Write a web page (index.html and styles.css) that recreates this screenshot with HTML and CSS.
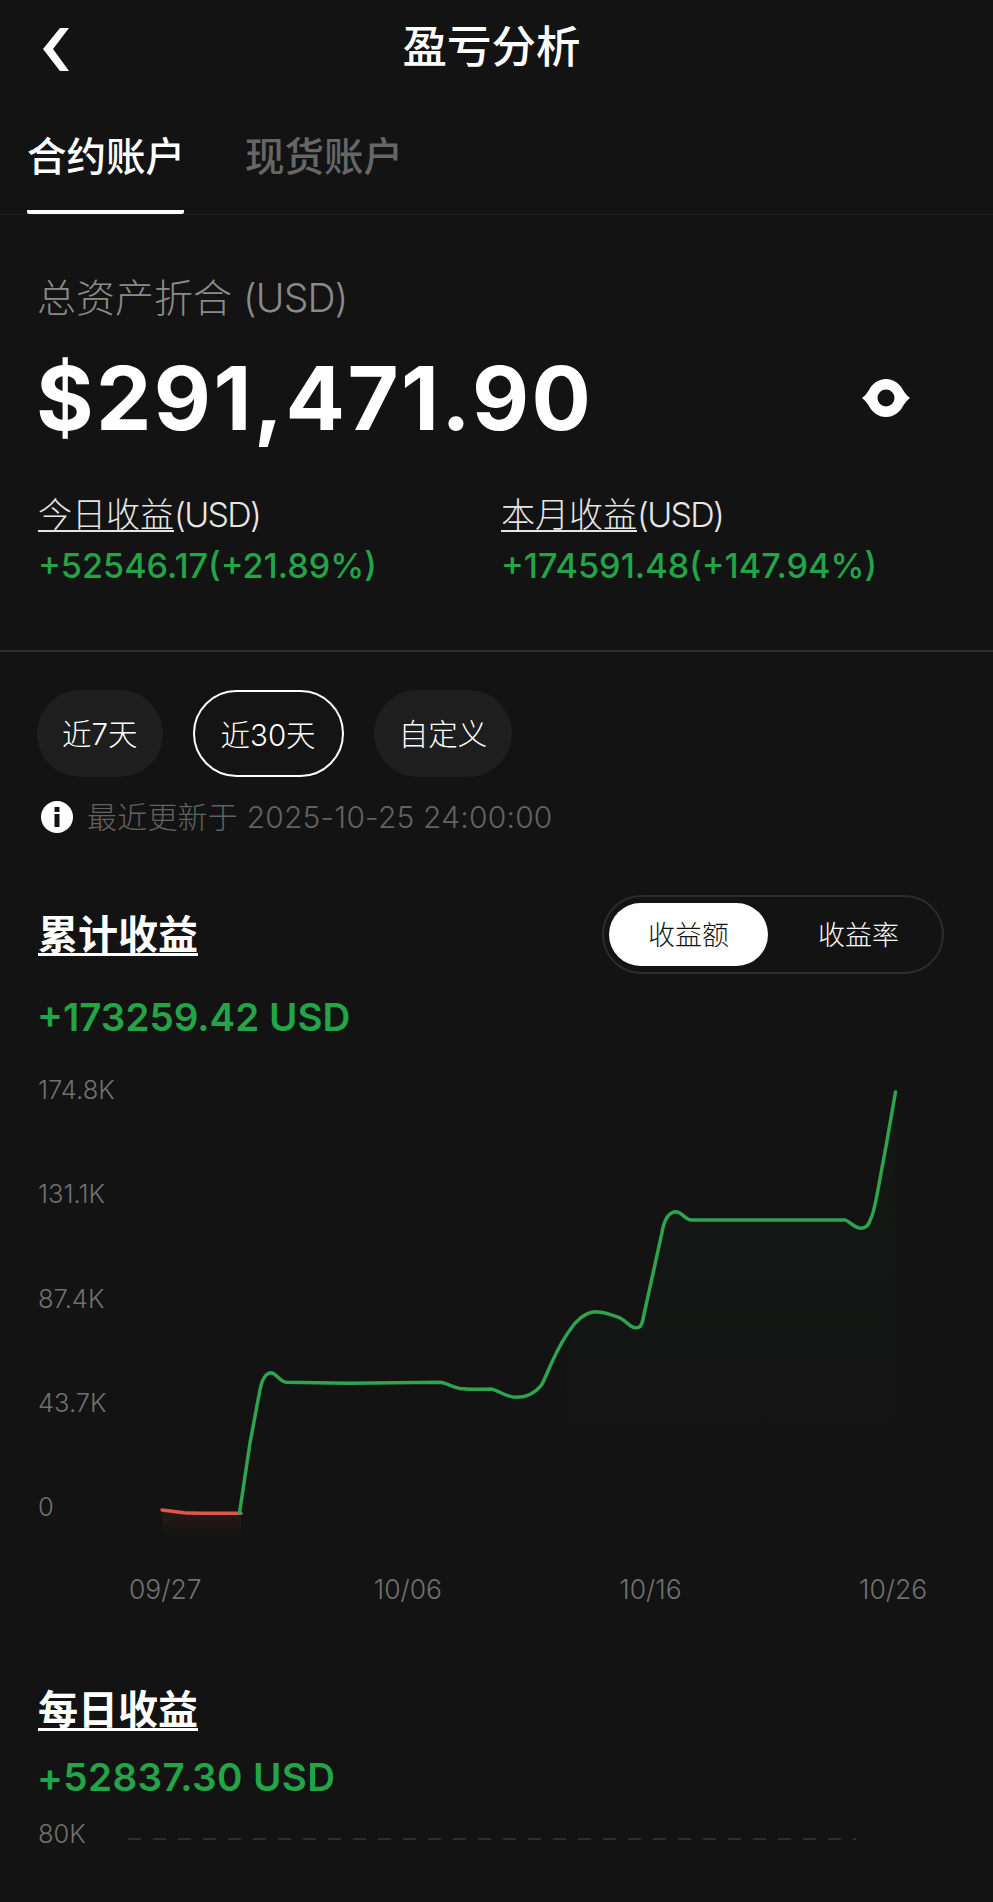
FILE: index.html
```html
<!DOCTYPE html>
<html lang="zh-CN">
<head>
  <meta charset="UTF-8">
  <meta name="viewport" content="width=device-width, initial-scale=1.0">
  <title>盈亏分析</title>
  <link rel="stylesheet" href="styles.css">
</head>
<body>
  <header class="topbar">
    <svg class="back-icon" width="26" height="43" viewBox="0 0 26 43"><path d="M17 0H26L10 21 26 43H17L0 21Z" fill="#fff"/></svg>
    <h1 class="page-title">盈亏分析</h1>
  </header>

  <nav class="tabs">
    <div class="tab tab-active">合约账户</div>
    <div class="tab">现货账户</div>
  </nav>

  <!-- 总资产 -->
  <section class="summary">
    <div class="summary-label">总资产折合 <span class="unit">(USD)</span></div>
    <div class="balance">
      <div class="balance-value">$291,471.90</div>
      <svg class="eye-icon" width="48" height="38" viewBox="0 0 48 38"><path fill-rule="evenodd" fill="#fff" d="M0 19C3 17 5 14 7 11 10 5 16 0 24 0 32 0 38 5 41 11 43 14 45 17 48 19 45 21 43 24 41 27 38 33 32 38 24 38 16 38 10 33 7 27 5 24 3 21 0 19ZM24 10.500A8.500 8.500 0 1 0 24 27.500 8.500 8.500 0 1 0 24 10.500Z"/></svg>
    </div>
    <div class="stats">
      <div>
        <div class="stat-label"><span class="stat-name">今日收益</span><span class="unit">(USD)</span></div>
        <div class="stat-value">+52546.17(+21.89%)</div>
      </div>
      <div>
        <div class="stat-label"><span class="stat-name">本月收益</span><span class="unit">(USD)</span></div>
        <div class="stat-value">+174591.48(+147.94%)</div>
      </div>
    </div>
  </section>

  <section class="content">
    <div class="ranges">
      <div class="range">近7天</div>
      <div class="range range-active">近30天</div>
      <div class="range">自定义</div>
    </div>
    <div class="update-note">
      <svg class="info-icon" width="32" height="32" viewBox="0 0 32 32"><circle cx="16" cy="16" r="16" fill="#fff"/><rect x="13.5" y="6" width="5" height="5" fill="#131313"/><rect x="13.5" y="13" width="5" height="13" fill="#131313"/></svg>
      <span>最近更新于 2025-10-25 24:00:00</span>
    </div>

    <!-- 累计收益 -->
    <div class="section-head">
      <h2 class="section-title">累计收益</h2>
      <div class="toggle">
        <div class="toggle-item toggle-active">收益额</div>
        <div class="toggle-item">收益率</div>
      </div>
    </div>
    <div class="total">+173259.42 USD</div>

    <div class="chart">
      <svg class="chart-line" viewBox="0 0 993 500">
        <defs>
          <linearGradient id="greenFade" x1="0" y1="0" x2="0" y2="1">
            <stop offset="0" stop-color="#2ea44f" stop-opacity="0.045"/>
            <stop offset="1" stop-color="#2ea44f" stop-opacity="0"/>
          </linearGradient>
          <linearGradient id="redFade" x1="0" y1="0" x2="0" y2="1">
            <stop offset="0" stop-color="#e0564a" stop-opacity="0.1"/>
            <stop offset="1" stop-color="#e0564a" stop-opacity="0"/>
          </linearGradient>
        </defs>
        <path fill="url(#greenFade)" d="M661.8 173.3C664 160 669 151.7 676.4 151.7 682 152 685 160 691.6 160L845.5 160C850 162 855 168.3 861.3 168.3 866 168.3 869 165 871 158 873 155 875 145 877 135L886.6 83 895.5 32 895.5 400 560 400 570 270C575 262 585 252 595.3 251.7 606 252 615 256 620 258 626 261 631 268 635 267.7 639 267.5 641 268 642.8 260Z"/>
        <path fill="url(#redFade)" d="M162 450L184 453 241 453 241 480 162 480Z"/>
        <path class="line-red" d="M162 450L184 452.7C195 453.3 225 453.3 241 453.3"/>
        <path class="line-green" d="M239.5 453L250 383 259 335C261 322 265 313 271 312.7 276 313 280 322 286.3 322.3L348 323.3 440 322.3C447 323 452 327 460 328.5 470 330 480 329 491 329 498 330 506 337.3 516 337.3 527 337.3 536 332 541.5 325 546 318 555 290 570 270 575 262 585 252 595.3 251.7 606 252 615 256 620 258 626 261 631 268 635 267.7 639 267.5 641 268 642.8 260L661.8 173.3C664 160 669 151.7 676.4 151.7 682 152 685 160 691.6 160L845.5 160C850 162 855 168.3 861.3 168.3 866 168.3 869 165 871 158 873 155 875 145 877 135L886.6 83 895.5 32"/>
      </svg>
      <div class="y-axis">
        <span>174.8K</span>
        <span>131.1K</span>
        <span>87.4K</span>
        <span>43.7K</span>
        <span>0</span>
      </div>
      <div class="x-axis">
        <span>09/27</span>
        <span>10/06</span>
        <span>10/16</span>
        <span>10/26</span>
      </div>
    </div>

    <!-- 每日收益 -->
    <h2 class="section-title daily-title">每日收益</h2>
    <div class="total">+52837.30 USD</div>
    <div class="daily-scale">
      <span class="axis-label">80K</span>
      <div class="dash-line"></div>
    </div>
  </section>
</body>
</html>
```

FILE: styles.css
```css
body {
  margin: 0;
  height: 1902px;
  overflow: hidden;
  background: #131313;
  color: #fff;
  font-family: Inter, "Noto Sans CJK SC", sans-serif;
}

h1,
h2 {
  margin: 0;
}

.topbar {
  display: grid;
  grid-template-columns: 1fr auto 1fr;
  align-items: center;
  height: 94px;
  padding: 0 53px 0 43px;
}

.back-icon {
  margin-top: 4px;
}

.page-title {
  font-size: 44.5px;
  font-weight: 500;
  line-height: 60px;
}

.tabs {
  display: flex;
  gap: 61px;
  height: 120px;
  padding-left: 27px;
  border-bottom: 1px solid #1f1f1f;
}

.tab {
  box-sizing: border-box;
  width: 157px;
  height: 120px;
  padding-top: 40px;
  font-size: 39.5px;
  font-weight: 500;
  line-height: 46px;
  white-space: nowrap;
  color: #666;
}

.tab-active {
  color: #fff;
  border-bottom: 4px solid #fff;
  border-radius: 0 0 2px 2px;
}

.summary {
  padding: 0 38px;
  border-bottom: 2px solid #2e2e2e;
}

.summary-label {
  margin: 58px 0 0 -1px;
  font-size: 39px;
  font-weight: 300;
  line-height: 50px;
  color: #8a8a8a;
}

.summary-label .unit {
  letter-spacing: -0.8px;
}

.balance {
  display: flex;
  justify-content: space-between;
  align-items: center;
  margin-top: 25px;
  padding-right: 45px;
}

.balance-value {
  margin-left: -2px;
  font-size: 88px;
  font-weight: 700;
  line-height: 100px;
  letter-spacing: 2.4px;
}

.stats {
  display: grid;
  grid-template-columns: 463px 1fr;
  margin-top: 45px;
  padding-bottom: 62px;
}

.stat-label {
  font-size: 34px;
  font-weight: 300;
  line-height: 44px;
  color: #e6e6e6;
}

.stat-label .unit {
  letter-spacing: -1.7px;
}

.stat-name {
  text-decoration: underline;
  text-decoration-thickness: 2px;
  text-decoration-skip-ink: none;
  text-underline-offset: 3px;
}

.stat-value {
  margin-top: 7px;
  font-size: 34.2px;
  font-weight: 500;
  line-height: 44px;
  color: #22a447;
}

.content {
  padding: 0 49px 0 37px;
}

.ranges {
  display: flex;
  gap: 30px;
  margin-top: 38px;
}

.range {
  box-sizing: border-box;
  display: flex;
  align-items: center;
  height: 87px;
  padding: 0 25px 4px;
  border-radius: 44px;
  background: #1e1e1e;
  font-size: 29.5px;
  font-weight: 300;
}

.range-active {
  padding: 0 26px 2px;
  background: #141414;
  border: 2px solid #fff;
}

.update-note {
  display: flex;
  align-items: center;
  gap: 14px;
  margin-top: 20px;
  padding-left: 4px;
  font-size: 30px;
  font-weight: 300;
  line-height: 40px;
  letter-spacing: 0.2px;
  color: #626262;
}

.section-head {
  display: flex;
  justify-content: space-between;
  align-items: center;
  margin-top: 58px;
}

.section-title {
  font-size: 40px;
  font-weight: 700;
  line-height: 50px;
  padding-left: 1px;
  text-decoration: underline;
  text-decoration-thickness: 3px;
  text-decoration-skip-ink: none;
  text-underline-offset: 4px;
}

.toggle {
  box-sizing: border-box;
  display: flex;
  gap: 11px;
  width: 342px;
  height: 79px;
  padding: 6px 4px 6px 5px;
  border: 2px solid #2c2c2c;
  border-radius: 40px;
}

.toggle-item {
  display: flex;
  justify-content: center;
  align-items: center;
  width: 159px;
  padding-bottom: 2px;
  border-radius: 32px;
  font-size: 27px;
  font-weight: 300;
}

.toggle-active {
  background: #fff;
  color: #131313;
}

.total {
  margin-top: 18px;
  font-size: 38.6px;
  font-weight: 600;
  line-height: 50px;
  color: #22a447;
}

.chart {
  position: relative;
  margin-top: 18px;
  padding-top: 15px;
}

.chart-line {
  position: absolute;
  top: 0;
  left: -37px;
  width: 993px;
  height: 500px;
}

.line-green,
.line-red {
  fill: none;
  stroke-width: 3.5;
  stroke-linecap: round;
  stroke-linejoin: round;
}

.line-green {
  stroke: #2ea44f;
}

.line-red {
  stroke: #e0564a;
}

.y-axis {
  display: flex;
  flex-direction: column;
  gap: 74.25px;
  align-items: flex-start;
  padding-left: 1px;
}

.y-axis span,
.x-axis span,
.axis-label {
  font-size: 25.5px;
  font-weight: 300;
  line-height: 30px;
  color: #707070;
}

.x-axis {
  display: grid;
  grid-template-columns: repeat(4, 242.6px);
  margin: 52px 0 0 7px;
  text-align: center;
}

.x-axis span {
  font-size: 26.5px;
}

.daily-title {
  margin-top: 81px;
}

.daily-title + .total {
  margin-top: 17px;
  letter-spacing: 0.4px;
}

.daily-scale {
  display: flex;
  align-items: center;
  gap: 42px;
  margin-top: 17px;
  padding-left: 1px;
}

.dash-line {
  width: 728px;
  height: 2px;
  margin-top: 10px;
  background: repeating-linear-gradient(to right, #2e2e2e 0 13px, transparent 13px 25px);
}
```
